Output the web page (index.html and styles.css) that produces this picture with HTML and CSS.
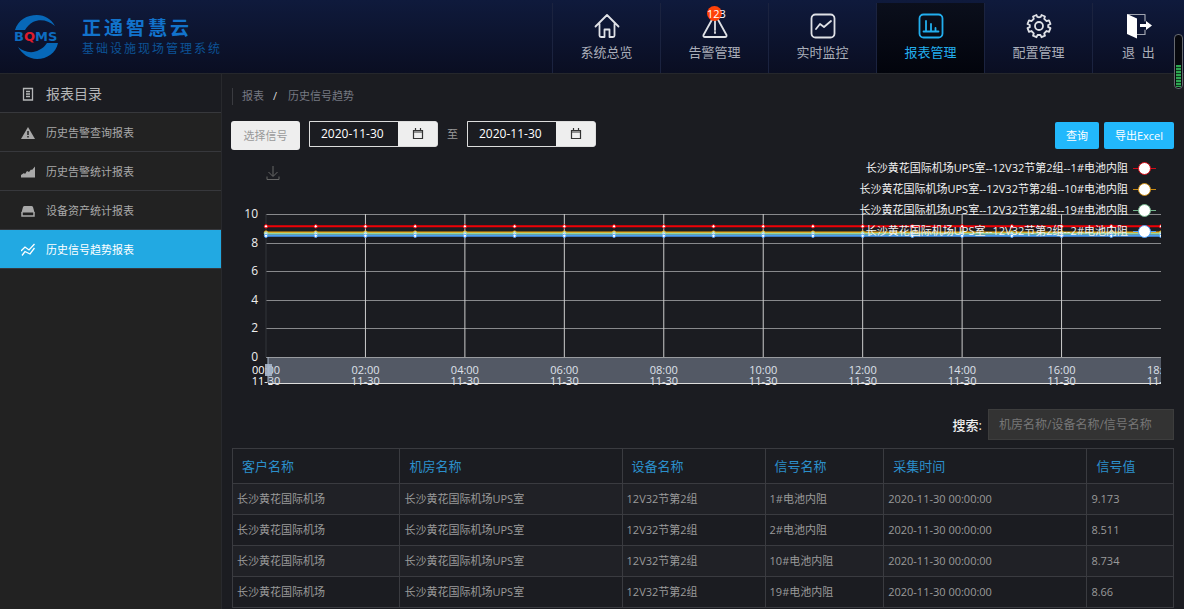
FILE: index.html
```html
<!DOCTYPE html>
<html lang="zh-CN">
<head>
<meta charset="utf-8">
<title>历史信号趋势报表</title>
<link rel="stylesheet" href="styles.css">
</head>
<body>
<header class="topbar">
  <div class="brand">
    <svg class="logo" viewBox="0 0 46 46" width="46" height="46" role="img" aria-label="BQMS">
      <path d="M1 16C4 6 13 1 23 1c8 0 14 4 18 11C34 6 26 4.500 19 8c-4 2-6 5-8 8z" fill="#0768b8"/>
      <path d="M4 33c6 5 14 7 21 3 4-2 6-4 8-7h11c-2 10-11 16-21 16-8 0-15-5-19-12z" fill="#0768b8"/>
      <text class="logo-text" x="0" y="27">B<tspan class="logo-red">Q</tspan>MS</text>
    </svg>
    <div class="brand-text">
      <h1>正通智慧云</h1>
      <p>基础设施现场管理系统</p>
    </div>
  </div>
  <nav class="nav">
    <a href="#" class="nav-item">
      <svg class="icon" viewBox="0 0 28 28"><path d="M2.500 14.500 14 3l11.500 11.500M6.500 12v11.500q0 1.500 1.500 1.500h3.500v-7.500h5V25H20q1.500 0 1.500-1.500V12"/></svg>
      <span>系统总览</span>
    </a>
    <a href="#" class="nav-item">
      <svg class="icon" viewBox="0 0 28 28"><path d="M13 4 2.500 23q-.6 2 1.500 2h20q2 0 1.500-2L15 4M14 8v10M14 20v1"/></svg>
      <b class="badge">123</b>
      <span>告警管理</span>
    </a>
    <a href="#" class="nav-item">
      <svg class="icon" viewBox="0 0 28 28"><rect x="2.500" y="2.500" width="23" height="23" rx="4"/><path d="m7 17 4-5 4 3 7-6"/></svg>
      <span>实时监控</span>
    </a>
    <a href="#" class="nav-item active">
      <svg class="icon" viewBox="0 0 28 28"><rect x="2.500" y="2.500" width="23" height="23" rx="4"/><path d="M6.500 19.500h15M9 19V9M14 19v-7M18.500 19v-3"/></svg>
      <span>报表管理</span>
    </a>
    <a href="#" class="nav-item">
      <svg class="icon" viewBox="0 0 28 28"><circle cx="14" cy="14" r="4"/><path d="m11.500 3 .8 2q1.700.5 3.400 0l.8-2 3.500 1.500-.8 2.300 2.400 2.400 2.400-.8L25.500 12l-2.300 1v2.200l2.300 1-1.500 3.600-2.400-.8-2.400 2.400.8 2.300-3.500 1.500-1-2.200h-3l-1 2.200L8 23.700l.8-2.300L6.400 19l-2.400.8-1.500-3.600 2.300-1V13l-2.300-1L4 8.400l2.400.8 2.400-2.400L8 4.500z"/></svg>
      <span>配置管理</span>
    </a>
    <a href="#" class="nav-item exit">
      <svg class="icon" viewBox="0 0 28 28"><path class="thin" d="M3 2.500h17V9M20 18v4.500h-8"/><path d="M2 2 12 6.500v20L2 22z" fill="#fff" stroke="none"/><path d="M15 12h6V9l6 4.500-6 4.500v-3h-6z" fill="#fff" stroke="none"/></svg>
      <span>退&nbsp; 出</span>
    </a>
  </nav>
</header>
<div class="meter"><i></i></div>
<div class="body">
  <aside class="side">
    <h2 class="side-head">
      <svg class="sicon" viewBox="0 0 14 14"><path d="M2.500 1.500h9v11.500h-9zM5 4.500h4M5 7h4M5 9.500h4" fill="none" stroke="currentColor" stroke-width="1.300"/></svg>
      报表目录
    </h2>
    <a href="#" class="side-item">
      <svg class="sicon" viewBox="0 0 14 14"><path d="M7 1 14 13H0z" fill="currentColor"/><path d="M7 5v4M7 10v1.500" stroke="#222" stroke-width="1.500"/></svg>
      历史告警查询报表
    </a>
    <a href="#" class="side-item">
      <svg class="sicon" viewBox="0 0 14 14"><path d="M0 12.500V10l3-2 1 1 2-3 2 1 2-2.500 1 .5 3-3.500v11z" fill="currentColor"/></svg>
      历史告警统计报表
    </a>
    <a href="#" class="side-item">
      <svg class="sicon" viewBox="0 0 14 14"><path d="M3.500 2h7q1 0 1.500 1l1.500 5.500H.5L2 3q.5-1 1.500-1z" fill="currentColor"/><path d="M1 8v4h12V8" fill="none" stroke="currentColor" stroke-width="1.500"/></svg>
      设备资产统计报表
    </a>
    <a href="#" class="side-item active">
      <svg class="sicon" viewBox="0 0 14 14"><path d="m0 8 4-4 4 3 5.500-6M1 12.500l3-4 5 2.500 4.500-6" fill="none" stroke="currentColor" stroke-width="1.300"/></svg>
      历史信号趋势报表
    </a>
  </aside>
  <main class="main">
    <div class="crumbs"><span>报表</span><i>/</i><span>历史信号趋势</span></div>
    <div class="tools">
      <button class="pick" type="button">选择信号</button>
      <div class="date">
        <input type="text" value="2020-11-30" aria-label="开始日期">
        <button type="button" aria-label="选择开始日期"><svg viewBox="0 0 12 12" width="12" height="12"><path d="M1.500 2.500h9v8h-9zM1 4h10M3.500 0v3M8.500 0v3" fill="none" stroke="#333" stroke-width="1.200"/></svg></button>
      </div>
      <span class="to">至</span>
      <div class="date">
        <input type="text" value="2020-11-30" aria-label="结束日期">
        <button type="button" aria-label="选择结束日期"><svg viewBox="0 0 12 12" width="12" height="12"><path d="M1.500 2.500h9v8h-9zM1 4h10M3.500 0v3M8.500 0v3" fill="none" stroke="#333" stroke-width="1.200"/></svg></button>
      </div>
      <div class="actions">
        <button type="button">查询</button>
        <button type="button">导出Excel</button>
      </div>
    </div>
    <section class="chart">
      <button class="save" type="button" aria-label="保存图片"><svg viewBox="0 0 14 14" width="14" height="14"><path d="M7 0v10M2.500 6 7 10.500 11.500 6M1 10.500v3h12v-3" fill="none" stroke="#666" stroke-width="1"/></svg></button>
      <svg class="plot" id="plot" width="100%" height="182"></svg>
      <ul class="legend">
        <li>长沙黄花国际机场UPS室--12V32节第2组--1#电池内阻<i class="mark red"></i></li>
        <li>长沙黄花国际机场UPS室--12V32节第2组--10#电池内阻<i class="mark orange"></i></li>
        <li>长沙黄花国际机场UPS室--12V32节第2组--19#电池内阻<i class="mark green"></i></li>
        <li>长沙黄花国际机场UPS室--12V32节第2组--2#电池内阻<i class="mark blue"></i></li>
      </ul>
    </section>
    <div class="search">
      <label for="q">搜索:</label>
      <input id="q" type="text" placeholder="机房名称/设备名称/信号名称">
    </div>
    <table class="grid">
      <colgroup><col class="c1"><col class="c2"><col class="c3"><col class="c4"><col class="c5"><col class="c6"></colgroup>
      <thead><tr><th>客户名称</th><th>机房名称</th><th>设备名称</th><th>信号名称</th><th>采集时间</th><th>信号值</th></tr></thead>
      <tbody>
        <tr><td>长沙黄花国际机场</td><td>长沙黄花国际机场UPS室</td><td>12V32节第2组</td><td>1#电池内阻</td><td>2020-11-30 00:00:00</td><td>9.173</td></tr>
        <tr><td>长沙黄花国际机场</td><td>长沙黄花国际机场UPS室</td><td>12V32节第2组</td><td>2#电池内阻</td><td>2020-11-30 00:00:00</td><td>8.511</td></tr>
        <tr><td>长沙黄花国际机场</td><td>长沙黄花国际机场UPS室</td><td>12V32节第2组</td><td>10#电池内阻</td><td>2020-11-30 00:00:00</td><td>8.734</td></tr>
        <tr><td>长沙黄花国际机场</td><td>长沙黄花国际机场UPS室</td><td>12V32节第2组</td><td>19#电池内阻</td><td>2020-11-30 00:00:00</td><td>8.66</td></tr>
      </tbody>
    </table>
  </main>
</div>
<script src="chart.js"></script>
</body>
</html>
```
FILE: chart.js
```js
const plot = document.getElementById('plot');
const TOP = 10, BOTTOM = 153, STEPS = 9;
const y = v => BOTTOM - (BOTTOM - TOP) * v / 10;

function add(tag, attrs, text) {
  const el = document.createElementNS('http://www.w3.org/2000/svg', tag);
  for (const k in attrs) el.setAttribute(k, attrs[k]);
  if (text) el.textContent = text;
  plot.appendChild(el);
}

for (let v = 0; v <= 10; v += 2) {
  const py = Math.round(y(v)) + 0.5;
  add('line', { x1: 0, x2: '100%', y1: py, y2: py, class: 'hline' });
  add('text', { x: -8, y: py + 3, class: 'ylabel' }, String(v));
}
add('line', { x1: 0, x2: 0, y1: TOP, y2: BOTTOM, class: 'axis' });

for (let i = 0; i <= STEPS; i++) {
  const x = (i * 100 / STEPS) + '%';
  if (i > 0 && i < STEPS) add('line', { x1: x, x2: x, y1: TOP, y2: BOTTOM, class: 'vline' });
  add('text', { x, y: 170, class: 'xlabel' }, String(i * 2).padStart(2, '0') + ':00');
  add('text', { x, y: 181, class: 'xlabel' }, '11-30');
}

const series = [
  { value: 9.173, color: '#f00006' },
  { value: 8.734, color: '#f5a50c' },
  { value: 8.66, color: '#8fd3a8' },
  { value: 8.511, color: '#4b9cf5' }
];
for (const s of series) {
  const py = y(s.value) + 0.5;
  add('line', { x1: 0, x2: '100%', y1: py, y2: py, stroke: s.color, 'stroke-width': 2 });
  for (let i = 0; i <= STEPS * 2; i++) {
    add('circle', { cx: (i * 50 / STEPS) + '%', cy: py, r: 1.7, fill: '#fff', stroke: s.color, 'stroke-width': 1 });
  }
}

add('rect', { x: 2, y: BOTTOM, width: '100%', height: 26, class: 'slider' });
add('line', { x1: 2, x2: '100%', y1: BOTTOM + 0.5, y2: BOTTOM + 0.5, class: 'slider-top' });
add('line', { x1: 2, x2: '100%', y1: BOTTOM + 26.5, y2: BOTTOM + 26.5, class: 'slider-bottom' });
add('line', { x1: 2, x2: 2, y1: BOTTOM, y2: BOTTOM + 26, class: 'handle-line' });
add('rect', { x: -1, y: BOTTOM + 7, width: 7, height: 12, class: 'handle' });
```
FILE: styles.css
```css
* { box-sizing: border-box; }
html, body { height: 100%; margin: 0; }
body {
  display: flex;
  flex-direction: column;
  overflow: hidden;
  background: #1b1c21;
  color: #999;
  font: 11px/16px "Open Sans", "Noto Sans CJK SC", sans-serif;
}
a { color: inherit; text-decoration: none; }
button, input { font: inherit; border: 0; padding: 0; margin: 0; }
h1, h2, p, ul { margin: 0; padding: 0; font-weight: 400; }
i { font-style: normal; }

.topbar {
  flex: none;
  display: flex;
  justify-content: space-between;
  height: 74px;
  background: linear-gradient(#0f1a3c, #0a0e22);
  border-bottom: 1px solid #25272c;
}
.brand { display: flex; align-items: center; gap: 22px; padding-left: 14px; }
.logo { overflow: visible; }
.logo-text { font: bold 13px "DejaVu Sans", sans-serif; fill: #0d6cc0; }
.logo-red { fill: #e01c2c; }
.brand h1 { font-size: 19px; line-height: 24px; font-weight: 700; letter-spacing: 3px; color: #1273cc; }
.brand p { font-size: 12px; line-height: 18px; letter-spacing: 2px; color: #0c5396; }

.nav { display: flex; padding-top: 3px; }
.nav-item {
  position: relative;
  display: flex;
  flex-direction: column;
  align-items: center;
  width: 108px;
  padding-top: 9px;
  gap: 2px;
  border-left: 1px solid #1b233f;
  font-size: 13px;
  line-height: 20px;
  color: #aaaeb9;
}
.nav-item.exit { width: 92px; }
.nav-item.active { color: #22aeee; background: linear-gradient(#0b0f1c, #02040c); }
.icon { width: 28px; height: 28px; fill: none; stroke: #dfe1e6; stroke-width: 1.8; stroke-linejoin: round; stroke-linecap: round; }
.icon .thin { stroke: #9fa3ae; stroke-width: 1.2; }
.active .icon { stroke: #22aeee; }
.badge {
  position: absolute;
  top: 3px;
  left: 46px;
  width: 15px;
  height: 15px;
  border-radius: 50%;
  background: #ff4208;
  color: #fff;
  font-weight: 400;
  font-size: 11px;
  line-height: 15px;
}
.meter {
  position: absolute;
  top: 34px;
  right: 1px;
  width: 9px;
  height: 55px;
  padding: 1px;
  display: flex;
  align-items: flex-end;
  border: 1px solid #666970;
  border-radius: 4px;
  background: #07080d;
}
.meter i { width: 100%; height: 22px; background: repeating-linear-gradient(#2ea552 0 2px, #0d3b1c 2px 3px); }

.body { flex: 1; display: flex; min-height: 0; }
.side { flex: none; width: 222px; background: #222; border-right: 1px solid #28292d; }
.side-head, .side-item { display: flex; align-items: center; height: 39px; padding-top: 2px; border-bottom: 1px solid #37383c; }
.side-head { padding-left: 21px; gap: 11px; background: #1b1c21; font-size: 14px; color: #b5b6b8; }
.side-item { padding-left: 21px; gap: 11px; color: #a9a9a9; }
.side-item.active { background: #22a9e2; color: #fff; }
.sicon { width: 14px; height: 14px; }

.main { flex: 1; min-width: 0; padding: 14px 10px 0 9px; }
.crumbs { display: flex; gap: 9px; height: 17px; margin-left: 1px; padding-left: 9px; border-left: 1px solid #3a3b40; color: #767981; }
.crumbs i { color: #ddd; margin-right: 2px; }
.tools { display: flex; align-items: flex-start; margin-top: 16px; }
.pick { width: 69px; height: 29px; margin-right: 9px; border-radius: 3px; background: #eee; color: #999; }
.date { display: flex; width: 129px; height: 26px; border: 1px solid #ddd; border-radius: 0 3px 3px 0; overflow: hidden; background: #eee; }
.date input { width: 88px; padding-left: 11px; background: #1b1c21; color: #fff; font-size: 12px; }
.date button { flex: 1; display: flex; align-items: center; justify-content: center; background: #eee; }
.to { width: 29px; line-height: 26px; text-align: center; }
.actions { display: flex; gap: 5px; margin-left: auto; }
.actions button { height: 27px; padding: 0 11px; border-radius: 2px; background: #22b8fc; color: #fff; margin-top: 1px; }

.chart { position: relative; padding: 16px 13px 0 35px; }
.save { display: block; width: 14px; height: 14px; background: none; }
.save svg { display: block; }
.plot { display: block; margin-top: 24px; overflow: visible; clip-path: inset(0 0 -10px -40px); }
.hline { stroke: #88898c; }
.vline { stroke: #ccc; }
.axis { stroke: #33353a; }
.ylabel { fill: #eee; font-size: 12px; text-anchor: end; }
.xlabel { fill: #fff; text-anchor: middle; }
.slider { fill: #a7b7cc; fill-opacity: .4; }
.slider-top { stroke: #999b9f; }
.slider-bottom { stroke: #ddd; }
.handle-line { stroke: #a7b7cc; }
.handle { fill: #a7b7cc; fill-opacity: .9; }
.legend { position: absolute; top: 10px; right: 18px; display: grid; gap: 5px; list-style: none; color: #f2f2f2; }
.legend li { display: flex; align-items: center; justify-content: flex-end; gap: 5px; }
.mark { width: 23px; height: 16px; display: flex; align-items: center; justify-content: center; background: linear-gradient(currentColor, currentColor) center / 100% 1px no-repeat; }
.mark::after { content: ""; width: 11px; height: 11px; border: 1px solid; border-radius: 50%; background: #fff; }
.red { color: #d30b17; }
.orange { color: #c98a13; }
.green { color: #74b58c; }
.blue { color: #4b9cf5; }

.search { display: flex; align-items: center; justify-content: flex-end; gap: 6px; margin-top: 23px; }
.search label { color: #eee; font-size: 13px; font-weight: 500; }
.search input { width: 186px; height: 31px; padding-left: 10px; background: #333; border: 1px solid #3d3d3d; color: #ccc; font-size: 12px; }
.search input::placeholder { color: #777; }

.grid { width: calc(100% - 1px); margin: 8px 0 0 1px; table-layout: fixed; border-collapse: collapse; }
.c1 { width: 17.8%; }
.c2 { width: 23.6%; }
.c3 { width: 15.2%; }
.c4 { width: 12.6%; }
.c5 { width: 21.6%; }
.c6 { width: 9.2%; }
.grid th, .grid td { border: 1px solid #3a3b40; text-align: left; font-weight: 400; }
.grid th { height: 35px; padding: 0 9px; color: #2b8fcb; font-size: 13px; }
.grid td { height: 31px; padding: 0 4px; color: #9a9a9a; }
.grid tbody tr:nth-child(odd) { background: #202126; }
```
